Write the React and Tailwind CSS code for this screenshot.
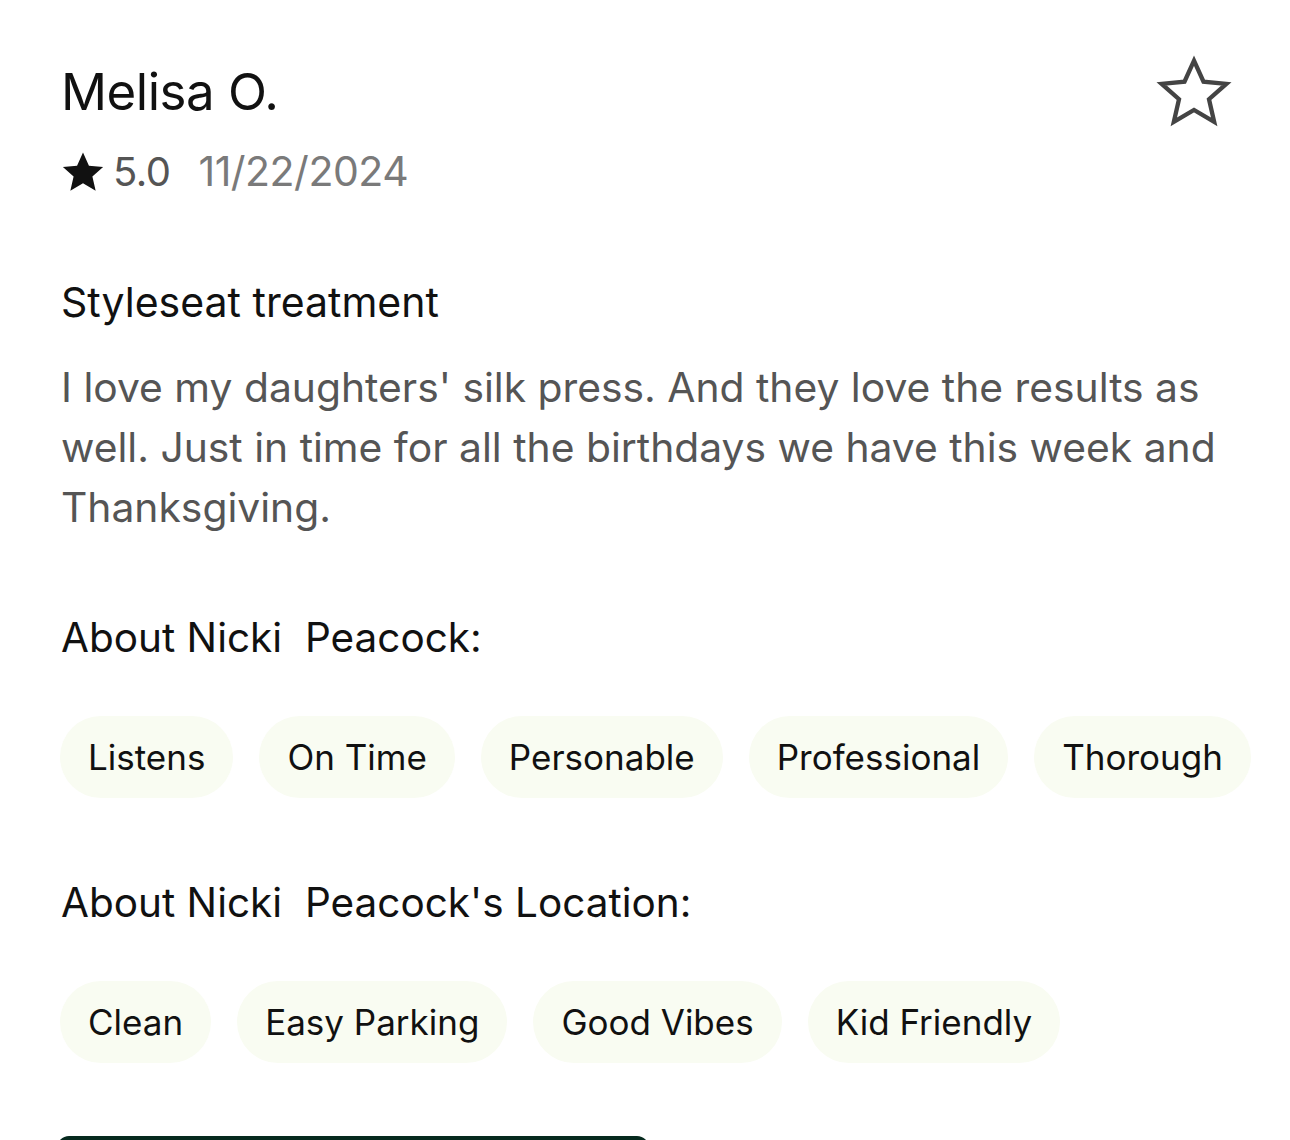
export default function App() {
  const about = ["Listens", "On Time", "Personable", "Professional", "Thorough"];
  const location = ["Clean", "Easy Parking", "Good Vibes", "Kid Friendly"];

  return (
    <div
      className="w-[1290px] h-[1140px] overflow-hidden bg-white pl-[61px]"
      style={{ fontFamily: "Inter, 'Liberation Sans', sans-serif" }}
    >
      <div className="flex items-start justify-between pt-16">
        <div>
          <h1 className="text-[51px] leading-[56px] text-[#111] tracking-[-0.5px]">Melisa O.</h1>
          <div className="mt-7 flex items-center h-12">
            <svg width="48" height="46" viewBox="0 0 24 24" className="-ml-[2px]">
              <path
                d="M12 1.8l3.1 6.9 7.4.7-5.6 5 1.7 7.4L12 17.9l-6.6 3.9 1.7-7.4-5.6-5 7.4-.7z"
                fill="#111"
              />
            </svg>
            <span className="ml-[6px] text-[40px] text-[#555] tracking-[-0.5px]">5.0</span>
            <span className="ml-[28px] text-[41px] text-[#7a7a7a] tracking-[-0.5px]">11/22/2024</span>
          </div>
        </div>
        <button className="mt-[-12px] mr-[56px]">
          <svg width="80" height="80" viewBox="0 0 24 24">
            <path
              d="M12 2.6l2.85 6.3 6.85.65-5.2 4.6 1.55 6.8L12 17.4l-6.05 3.55 1.55-6.8-5.2-4.6 6.85-.65z"
              fill="none"
              stroke="#444"
              strokeWidth="1.3"
              strokeLinejoin="miter"
            />
          </svg>
        </button>
      </div>

      <h2 className="mt-[82px] text-[41px] leading-[48px] text-[#111]">Styleseat treatment</h2>
      <p className="mt-[31px] w-[1222px] text-[40.8px] leading-[60px] text-[#555]">
        I love my daughters' silk press. And they love the results as well. Just in time for all the birthdays we have this week and Thanksgiving.
      </p>

      <h3 className="mt-[77px] text-[40.5px] leading-[48px] text-[#111] whitespace-pre">About Nicki  Peacock:</h3>
      <div className="mt-[54px] flex gap-[26px] -ml-px">
        {about.map((t) => (
          <span key={t} className="shrink-0 whitespace-nowrap h-[82px] px-[28px] flex items-center rounded-full bg-[#f9fcf2] text-[35px] text-[#111]">
            {t}
          </span>
        ))}
      </div>

      <h3 className="mt-[81px] text-[40.5px] leading-[48px] text-[#111] whitespace-pre">About Nicki  Peacock's Location:</h3>
      <div className="mt-[54px] flex gap-[26px] -ml-px">
        {location.map((t) => (
          <span key={t} className="shrink-0 whitespace-nowrap h-[82px] px-[28px] flex items-center rounded-full bg-[#f9fcf2] text-[35px] text-[#111]">
            {t}
          </span>
        ))}
      </div>

      <div className="mt-[73px] ml-[-4px] w-[592px] h-[60px] rounded-t-[12px] bg-[#062a1e]" />
    </div>
  );
}
